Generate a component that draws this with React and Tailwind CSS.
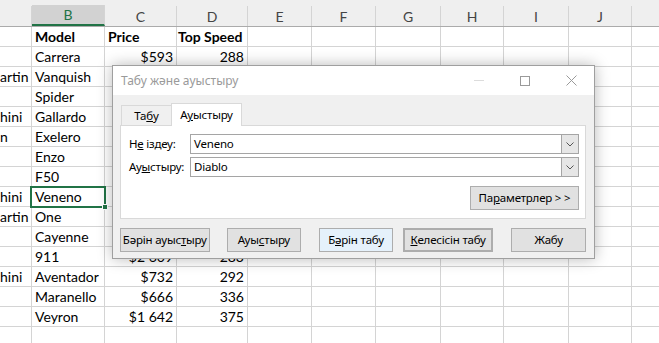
const cols = [
  { key: "A", w: "w-[32px]" },
  { key: "B", w: "w-[73px]" },
  { key: "C", w: "w-[72px]" },
  { key: "D", w: "w-[71px]" },
  { key: "E", w: "w-[64px]" },
  { key: "F", w: "w-[64px]" },
  { key: "G", w: "w-[65px]" },
  { key: "H", w: "w-[63px]" },
  { key: "I", w: "w-[65px]" },
  { key: "J", w: "w-[63px]" },
  { key: "K", w: "w-[40px]" },
];

// make (cut off), model, price, top speed — rows under the dialog keep only the model
const rows = [
  ["", "Model", "Price", "Top Speed", true],
  ["", "Carrera", "$593", "288"],
  ["artin", "Vanquish", "", ""],
  ["", "Spider", "", ""],
  ["hini", "Gallardo", "", ""],
  ["n", "Exelero", "", ""],
  ["", "Enzo", "", ""],
  ["", "F50", "", ""],
  ["hini", "Veneno", "", ""],
  ["artin", "One", "", ""],
  ["", "Cayenne", "", ""],
  ["", "911", "$2 609", "283"],
  ["hini", "Aventador", "$732", "292"],
  ["", "Maranello", "$666", "336"],
  ["", "Veyron", "$1 642", "375"],
  ["", "", "", ""],
];

function Sheet() {
  return (
    <div className="font-['Lato',sans-serif] text-[14px] text-black">
      {/* column headers */}
      <div className="flex h-[27px] bg-[#efefef] border-b border-[#ababab] items-end">
        {cols.map((c) => (
          <div
            key={c.key}
            className={`${c.w} shrink-0 h-[20px] flex items-center justify-center border-r border-[#d4d4d4] text-[14px] ${
              c.key === "B"
                ? "bg-[#d2d2d2] text-[#217346] border-b-2 border-b-[#217346] h-[21px]"
                : "text-[#444]"
            }`}
          >
            {c.key === "A" || c.key === "K" ? "" : c.key}
          </div>
        ))}
      </div>

      {rows.map((r, i) => (
        <div key={i} className="flex h-[20px] border-b border-[#d4d4d4] leading-[20px]">
          <div className="w-[32px] shrink-0 border-r border-[#d4d4d4] overflow-hidden whitespace-nowrap">
            {r[0]}
          </div>
          <div className={`w-[73px] shrink-0 border-r border-[#d4d4d4] pl-[3px] ${r[4] ? "font-bold" : ""}`}>
            {r[1]}
          </div>
          <div
            className={`w-[72px] shrink-0 border-r border-[#d4d4d4] px-[3px] ${
              r[4] ? "font-bold text-left" : "text-right"
            }`}
          >
            {r[2]}
          </div>
          <div
            className={`w-[71px] shrink-0 border-r border-[#d4d4d4] px-[3px] whitespace-nowrap ${
              r[4] ? "font-bold text-left pl-[1px]" : "text-right"
            }`}
          >
            {r[3]}
          </div>
          <div className="w-[64px] shrink-0 border-r border-[#d4d4d4]" />
          <div className="w-[64px] shrink-0 border-r border-[#d4d4d4]" />
          <div className="w-[65px] shrink-0 border-r border-[#d4d4d4]" />
          <div className="w-[63px] shrink-0 border-r border-[#d4d4d4]" />
          <div className="w-[65px] shrink-0 border-r border-[#d4d4d4]" />
          <div className="w-[63px] shrink-0 border-r border-[#d4d4d4]" />
          <div className="w-[40px] shrink-0" />
        </div>
      ))}

      {/* active cell */}
      <div className="absolute left-[30px] top-[186px] w-[76px] h-[22px] border-2 border-[#217346]">
        <div className="absolute -right-[4px] -bottom-[4px] w-[6px] h-[6px] bg-[#217346] border border-white" />
      </div>
    </div>
  );
}

function Btn({ className = "", children }) {
  return (
    <button
      className={`h-[24px] flex items-center justify-center whitespace-nowrap bg-[#e1e1e1] border border-[#adadad] text-black ${className}`}
    >
      {children}
    </button>
  );
}

function Combo({ value }) {
  return (
    <div className="flex-1 h-[20px] flex border border-[#a5a5a5] bg-white">
      <div className="flex-1 pl-[3px] leading-[18px]">{value}</div>
      <div className="w-[17px] bg-[#e6e6e6] border-l border-[#a5a5a5] flex items-center justify-center">
        <svg width="8" height="5" viewBox="0 0 8 5">
          <path d="M0.5 0.5 L4 4 L7.5 0.5" fill="none" stroke="#555" strokeWidth="1" />
        </svg>
      </div>
    </div>
  );
}

function Dialog() {
  return (
    <div className="absolute left-[112px] top-[65px] w-[483px] h-[194px] border border-[#9f9f9f] bg-[#f0f0f0] shadow-[0_0_14px_rgba(0,0,0,0.28)] flex flex-col font-['Noto_Sans',sans-serif] text-[11.5px] tracking-[-0.2px] text-black">
      {/* title bar */}
      <div className="h-[29px] bg-white flex items-center shrink-0">
        <div className="flex-1 pl-[8px] text-[#9a9a9a] text-[12px] tracking-normal">Табу және ауыстыру</div>
        <div className="w-[46px] h-full flex items-center justify-center">
          <div className="w-[10px] h-px bg-[#dcdcdc]" />
        </div>
        <div className="w-[46px] h-full flex items-center justify-center">
          <div className="w-[10px] h-[10px] border border-[#9a9a9a]" />
        </div>
        <div className="w-[46px] h-full flex items-center justify-center">
          <svg width="11" height="11" viewBox="0 0 11 11">
            <path d="M0.5 0.5 L10.5 10.5 M10.5 0.5 L0.5 10.5" stroke="#9a9a9a" strokeWidth="1" />
          </svg>
        </div>
      </div>

      {/* body */}
      <div className="flex-1 flex flex-col pl-[7px] pr-[8px] pt-[8px]">
        {/* tabs */}
        <div className="flex items-end h-[22px] pl-[1px]">
          <div className="w-[51px] h-[20px] border border-b-0 border-[#d9d9d9] flex items-center justify-center">
            Та<span className="underline">б</span>у
          </div>
          <div className="w-[71px] h-[23px] -mb-px bg-white border border-b-0 border-[#d9d9d9] -ml-px flex items-center justify-center relative z-10">
            А<span className="underline">у</span>ыстыру
          </div>
        </div>
        <div className="h-[94px] bg-white border border-[#d9d9d9] pl-[8px] pr-[6px] pt-[8px] flex flex-col">
          <div className="flex items-center">
            <div className="w-[61px] whitespace-nowrap">
              Н<span className="underline">е</span> іздеу:
            </div>
            <Combo value="Veneno" />
          </div>
          <div className="flex items-center mt-[3px]">
            <div className="w-[61px] whitespace-nowrap">
              Ау<span className="underline">ы</span>стыру:
            </div>
            <Combo value="Diablo" />
          </div>
          <div className="flex justify-end mt-[9px]">
            <Btn className="w-[109px] h-[22px]">
              Па<span className="underline">р</span>аметрлер &gt; &gt;
            </Btn>
          </div>
        </div>

        {/* buttons */}
        <div className="flex mt-[9px]">
          <Btn className="w-[90px]">
            Бәрін ауыс<span className="underline">т</span>ыру
          </Btn>
          <Btn className="w-[75px] ml-[17px]">
            Ауы<span className="underline">с</span>тыру
          </Btn>
          <Btn className="w-[74px] ml-[18px] bg-[#e5f1fb] border-[#0078d7]">
            Б<span className="underline">ә</span>рін табу
          </Btn>
          <Btn className="w-[91px] ml-[10px] border-2 border-[#0078d7]">
            <span className="underline">К</span>елесісін табу
          </Btn>
          <Btn className="w-[75px] ml-[18px]">Жабу</Btn>
        </div>
      </div>
    </div>
  );
}

export default function App() {
  return (
    <div className="relative w-[659px] h-[343px] overflow-hidden bg-white">
      <Sheet />
      <Dialog />
    </div>
  );
}
